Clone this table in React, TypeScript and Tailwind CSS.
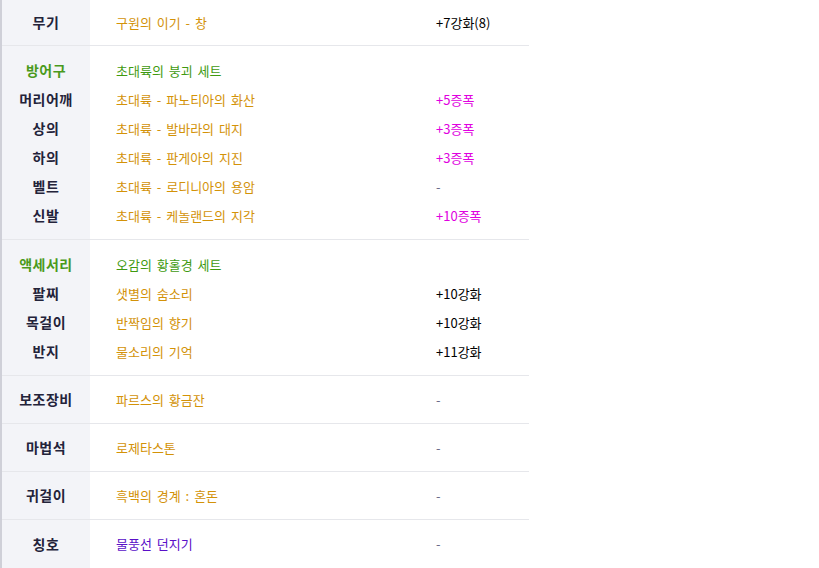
import React from "react";

type Item = { label: string; name: string; value: string; nameColor?: string; valueColor?: string; head?: boolean };

const weapon: Item = { label: "무기", name: "구원의 이기 - 창", value: "+7강화(8)", valueColor: "text-black" };

const armor: Item[] = [
  { label: "방어구", name: "초대륙의 붕괴 세트", value: "", head: true },
  { label: "머리어깨", name: "초대륙 - 파노티아의 화산", value: "+5증폭", valueColor: "text-[#e000e0]" },
  { label: "상의", name: "초대륙 - 발바라의 대지", value: "+3증폭", valueColor: "text-[#e000e0]" },
  { label: "하의", name: "초대륙 - 판게아의 지진", value: "+3증폭", valueColor: "text-[#e000e0]" },
  { label: "벨트", name: "초대륙 - 로디니아의 용암", value: "-" },
  { label: "신발", name: "초대륙 - 케놀랜드의 지각", value: "+10증폭", valueColor: "text-[#e000e0]" },
];

const accessory: Item[] = [
  { label: "액세서리", name: "오감의 황홀경 세트", value: "", head: true },
  { label: "팔찌", name: "샛별의 숨소리", value: "+10강화", valueColor: "text-black" },
  { label: "목걸이", name: "반짝임의 향기", value: "+10강화", valueColor: "text-black" },
  { label: "반지", name: "물소리의 기억", value: "+11강화", valueColor: "text-black" },
];

const singles: Item[] = [
  { label: "보조장비", name: "파르스의 황금잔", value: "-" },
  { label: "마법석", name: "로제타스톤", value: "-" },
  { label: "귀걸이", name: "흑백의 경계 : 혼돈", value: "-" },
  { label: "칭호", name: "물풍선 던지기", value: "-", nameColor: "text-[#5a10c8]" },
];

const Row = ({ item, h }: { item: Item; h: string }) => (
  <div className={`flex items-center ${h}`}>
    <div
      className={`w-[88px] shrink-0 text-center text-[14px] font-bold tracking-[0.5px] ${
        item.head ? "text-[#4a9a1c]" : "text-[#23233a]"
      }`}
    >
      {item.label}
    </div>
    <div
      className={`w-[320px] shrink-0 pl-[26px] text-[13px] [word-spacing:2px] ${
        item.head ? "text-[#3f9a10]" : item.nameColor ?? "text-[#d39208]"
      }`}
    >
      {item.name}
    </div>
    <div className={`pl-[26px] text-[13px] ${item.valueColor ?? "text-[#6a6a88]"}`}>{item.value}</div>
  </div>
);

const Group = ({ items }: { items: Item[] }) => (
  <div className="pt-[10px] pb-[9px]">
    {items.map((it) => (
      <Row key={it.label} item={it} h="h-[29px]" />
    ))}
  </div>
);

export default function App() {
  return (
    <div className="w-[819px] h-[568px] bg-white" style={{ fontFamily: '"Noto Sans CJK KR", "Noto Sans", sans-serif' }}>
      <div className="relative w-[529px] border-l-2 border-b-2 border-[#cfd0d8] bg-white">
        <div className="absolute left-0 top-0 bottom-0 w-[88px] bg-[#f3f4f8]" />
        <div className="relative divide-y divide-[#e6e7eb]">
          <Row item={weapon} h="h-[46px]" />
          <Group items={armor} />
          <Group items={accessory} />
          {singles.map((it) => (
            <Row key={it.label} item={it} h="h-[48px]" />
          ))}
        </div>
      </div>
    </div>
  );
}
